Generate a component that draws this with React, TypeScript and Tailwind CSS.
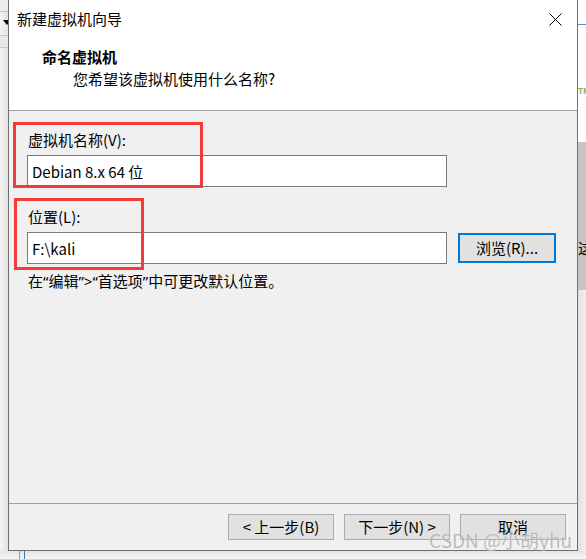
import React from "react";

const font = { fontFamily: '"Noto Sans CJK SC", "Microsoft YaHei", "Noto Sans", sans-serif' };
const latin = { fontFamily: '"Noto Sans", "Liberation Sans", sans-serif' };

function CloseIcon() {
  return (
    <svg width="13" height="13" viewBox="0 0 13 13" className="block">
      <line x1="0.5" y1="0.5" x2="12.5" y2="12.5" stroke="#000" strokeWidth="1" />
      <line x1="12.5" y1="0.5" x2="0.5" y2="12.5" stroke="#000" strokeWidth="1" />
    </svg>
  );
}

function WizardButton({ children }: { children: React.ReactNode }) {
  return (
    <button className="w-[106px] h-[26px] border border-[#adadad] bg-[#e1e1e1] text-[15px] leading-[20px] text-black flex items-center justify-center">
      {children}
    </button>
  );
}

// narrow quote marks, as the Windows UI font draws them
function Q({ c }: { c: string }) {
  return <span style={latin}>{c}</span>;
}

export default function App() {
  return (
    <div className="w-[586px] h-[559px] overflow-hidden bg-[#f0f0f0] flex flex-col text-black" style={font}>
      <div className="flex h-[551px]">
        {/* strip of the window behind, left */}
        <div className="w-[8px] h-full bg-gradient-to-r from-[#f4f4f4] to-[#e2e2e2] flex flex-col">
          <div className="h-[12px] border-b border-[#c8c8c8] bg-[#ececec]" />
          <div className="h-[24px] border-b border-[#c8c8c8] relative">
            <span className="absolute left-[3px] top-[8px] w-0 h-0 border-l-[4px] border-r-[4px] border-t-[5px] border-l-transparent border-r-transparent border-t-black" />
          </div>
          <div className="h-[12px] border-b border-[#c8c8c8] bg-[#e8e8e8]" />
        </div>

        {/* dialog */}
        <div className="w-[570px] h-[551px] border-x border-b border-[#6f6f6f] bg-[#f0f0f0] flex flex-col relative">
          <div className="h-[111px] bg-white border-b border-[#a0a0a0] flex flex-col">
            <div className="h-[38px] flex items-center justify-between pl-[8px] pr-[15px]">
              <span className="text-[15px] leading-[20px]">新建虚拟机向导</span>
              <CloseIcon />
            </div>
            <div className="mt-[9px] pl-[33px] text-[15px] leading-[20px] font-bold">命名虚拟机</div>
            <div className="mt-[2px] pl-[64px] text-[15px] leading-[20px]">您希望该虚拟机使用什么名称?</div>
          </div>

          <div className="flex-1 pl-[18px] flex flex-col">
            <div className="mt-[19px] text-[15px] leading-[20px] pl-[1px]">虚拟机名称(V):</div>
            <input
              readOnly
              value="Debian 8.x 64 位"
              className="mt-[5px] w-[420px] h-[32px] border border-[#7a7a7a] bg-white pl-[4px] text-[15px] outline-none"
              style={font}
            />
            <div className="mt-[20px] text-[15px] leading-[20px] pl-[1px]">位置(L):</div>
            <div className="mt-[5px] flex items-center gap-[11px]">
              <input
                readOnly
                value="F:\kali"
                className="w-[420px] h-[32px] border border-[#7a7a7a] bg-white pl-[4px] text-[15px] outline-none"
                style={font}
              />
              <button className="w-[98px] h-[30px] border-2 border-[#0078d7] bg-[#e1e1e1] text-[15px] leading-[20px] flex items-center justify-center">
                浏览(R)...
              </button>
            </div>
            <div className="mt-[7px] text-[15px] leading-[20px] pl-[1px]">
              在<Q c="“" />编辑<Q c="”" /><Q c=">" /><Q c="“" />首选项<Q c="”" />中可更改默认位置。
            </div>
          </div>

          <div className="h-[47px] border-t border-[#a0a0a0] flex items-start justify-end gap-[10px] pt-[10px] pr-[11px]">
            <WizardButton>&lt; 上一步(B)</WizardButton>
            <WizardButton>下一步(N) &gt;</WizardButton>
            <WizardButton>取消</WizardButton>
          </div>

          {/* annotation boxes */}
          <div className="absolute left-[4px] top-[122px] w-[190px] h-[66px] border-[3px] border-[#f03c3c]" />
          <div className="absolute left-[5px] top-[198px] w-[130px] h-[72px] border-[3px] border-[#f03c3c]" />

          {/* watermark */}
          <div
            className="absolute right-[5px] bottom-[-1px] text-[19px] leading-[22px] text-[rgba(140,140,140,0.6)]"
            style={{ ...font, textShadow: "0 0 1px rgba(255,255,255,0.9)" }}
          >
            CSDN @小胡yhu
          </div>
        </div>

        {/* strip of the window behind, right */}
        <div className="w-[8px] h-full flex flex-col">
          <div className="h-[142px] bg-white relative">
            <div className="absolute left-0 right-0 top-[24px] h-[1px] bg-[#4a90d0]" />
            <span className="absolute left-0 top-[86px] text-[8px] leading-[10px] font-bold text-[#7cb342]">TM</span>
          </div>
          <div className="h-[148px] bg-[#c6c6c6] relative overflow-hidden">
            <span className="absolute left-0 top-[96px] text-[15px] leading-[20px]">这</span>
          </div>
          <div className="flex-1 bg-gradient-to-r from-[#e0e0e0] to-[#f2f2f2]" />
        </div>
      </div>
      <div className="h-[8px] bg-gradient-to-b from-[#e4e4e4] to-[#f6f6f6] relative">
        <div className="absolute left-[19px] top-0 w-[1px] h-full bg-[#9a9a9a]" />
        <div className="absolute left-[24px] top-0 w-[1px] h-full bg-[#3c7fb8]" />
      </div>
    </div>
  );
}
